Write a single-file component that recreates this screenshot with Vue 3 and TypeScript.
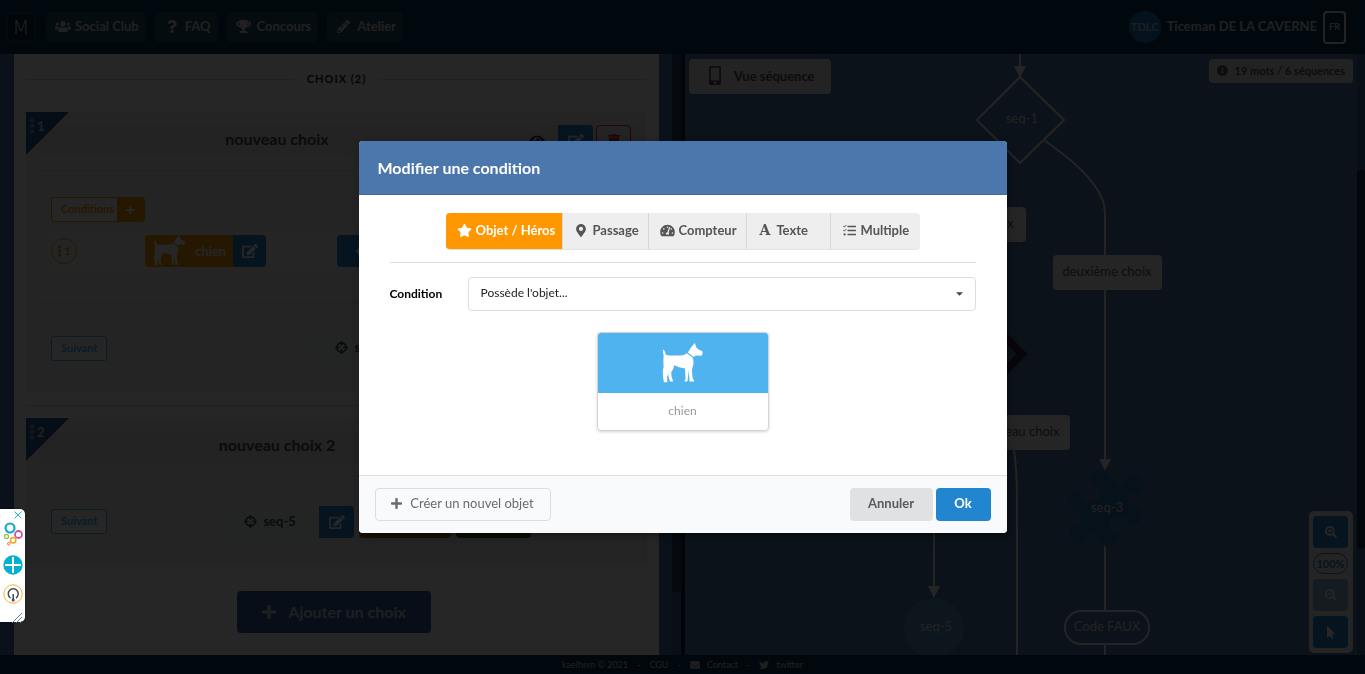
<script setup lang="ts">
import { ref, h, type FunctionalComponent } from 'vue'

interface Glyph { w: number; d: string }

const lens = 'M505 476.7L476.7 505c-9.4 9.4-24.6 9.4-33.9 0L343 405.3c-4.5-4.5-7-10.6-7-17V372c-35.3 27.6-79.7 44-128 44C93.1 416 0 322.9 0 208S93.1 0 208 0s208 93.1 208 208c0 48.3-16.4 92.7-44 128h16.3c6.4 0 12.5 2.5 17 7l99.7 99.7c9.3 9.4 9.3 24.6 0 34zM344 208c0-75.2-60.8-136-136-136S72 132.8 72 208s60.8 136 136 136 136-60.8 136-136z'

const glyphs: Record<string, Glyph> = {
  users: { w: 640, d: 'M96 224c35.3 0 64-28.7 64-64s-28.7-64-64-64-64 28.7-64 64 28.7 64 64 64zm448 0c35.3 0 64-28.7 64-64s-28.7-64-64-64-64 28.7-64 64 28.7 64 64 64zm32 32h-64c-17.6 0-33.5 7.1-45.1 18.6 40.3 22.1 68.9 62 75.1 109.4h66c17.7 0 32-14.3 32-32v-32c0-35.3-28.7-64-64-64zm-256 0c61.9 0 112-50.1 112-112S381.9 32 320 32 208 82.1 208 144s50.1 112 112 112zm76.8 32h-8.3c-20.8 10-43.9 16-68.5 16s-47.6-6-68.5-16h-8.3C179.6 288 128 339.6 128 403.2V432c0 26.5 21.5 48 48 48h288c26.5 0 48-21.5 48-48v-28.8c0-63.6-51.6-115.2-115.2-115.2zm-223.7-13.4C161.5 263.1 145.6 256 128 256H64c-35.3 0-64 28.7-64 64v32c0 17.7 14.3 32 32 32h65.9c6.3-47.4 34.9-87.3 75.2-109.4z' },
  question: { w: 384, d: 'M202 0C122.2 0 70.5 32.7 29.900 91c-7.400 10.600-5.100 25.100 5.200 32.900l43.100 32.700c10.400 7.900 25.100 6 33.300-4.100 25-31.400 43.600-49.400 82.700-49.400 30.800 0 68.800 19.800 68.800 49.600 0 22.600-18.600 34.100-49 51.200-35.400 19.900-82.300 44.600-82.300 106.400V320c0 13.300 10.700 24 24 24h72.500c13.300 0 24-10.700 24-24v-5.800c0-42.900 125.300-44.600 125.300-160.600C377.500 66.300 286.900 0 202 0zM192 373.500c-38.200 0-69.300 31.100-69.300 69.300S153.800 512 192 512s69.300-31.100 69.300-69.300-31.100-69.200-69.300-69.200z' },
  trophy: { w: 576, d: 'M552 64H448V24c0-13.3-10.7-24-24-24H152c-13.3 0-24 10.7-24 24v40H24C10.7 64 0 74.7 0 88v56c0 35.7 22.5 72.4 61.9 100.7 31.5 22.7 69.8 37.1 110 41.7C203.3 338.5 240 360 240 360v72h-48c-35.3 0-64 20.7-64 56v12c0 6.6 5.4 12 12 12h296c6.6 0 12-5.4 12-12v-12c0-35.3-28.7-56-64-56h-48v-72s36.7-21.5 68.1-73.6c40.3-4.6 78.6-19 110-41.7 39.3-28.3 61.9-65 61.9-100.7V88c0-13.3-10.7-24-24-24zM99.3 192.8C74.9 175.2 64 155.6 64 144v-16h64.2c1 32.6 5.8 61.2 12.8 86.2-15.1-5.2-29.2-12.4-41.7-21.4zM512 144c0 16.1-17.7 36.1-35.3 48.8-12.5 9-26.7 16.2-41.8 21.4 7-25 11.8-53.6 12.8-86.2H512v16z' },
  pencil: { w: 512, d: 'M497.9 142.1l-46.1 46.1c-4.7 4.7-12.3 4.7-17 0l-111-111c-4.7-4.7-4.7-12.3 0-17l46.1-46.1c18.7-18.7 49.1-18.7 67.9 0l60.1 60.1c18.8 18.7 18.8 49.1 0 67.900zM284.200 99.800L21.600 362.400.4 483.900c-2.900 16.400 11.400 30.600 27.800 27.800l121.500-21.300 262.600-262.600c4.700-4.700 4.700-12.300 0-17l-111-111c-4.800-4.700-12.400-4.700-17.100 0zM124.100 339.900c-5.500-5.500-5.500-14.300 0-19.800l154-154c5.500-5.500 14.300-5.500 19.800 0s5.500 14.300 0 19.800l-154 154c-5.500 5.500-14.300 5.500-19.800 0zM88 424h48v36.300l-64.500 11.300-31.100-31.100L51.700 376H88v48z' },
  star: { w: 576, d: 'M259.3 17.8L194 150.2 47.9 171.5c-26.2 3.8-36.7 36.1-17.7 54.6l105.7 103-25 145.5c-4.5 26.3 23.2 46 46.4 33.7L288 439.6l130.7 68.7c23.2 12.2 50.9-7.4 46.4-33.7l-25-145.5 105.7-103c19-18.5 8.5-50.8-17.7-54.6L382 150.2 316.7 17.8c-11.7-23.6-45.6-23.9-57.4 0z' },
  marker: { w: 384, d: 'M172.268 501.67C26.97 291.031 0 269.413 0 192 0 85.961 85.961 0 192 0s192 85.961 192 192c0 77.413-26.97 99.031-172.268 309.67-9.535 13.774-29.93 13.773-39.464 0zM192 272c44.183 0 80-35.817 80-80s-35.817-80-80-80-80 35.817-80 80 35.817 80 80 80z' },
  gauge: { w: 576, d: 'M288 32C128.94 32 0 160.94 0 320c0 52.8 14.25 102.26 39.06 144.8 5.61 9.62 16.3 15.2 27.44 15.2h443c11.14 0 21.83-5.58 27.44-15.2C561.75 422.26 576 372.8 576 320c0-159.06-128.94-288-288-288zm0 64c14.71 0 26.58 10.13 30.32 23.65-1.11 2.26-2.64 4.23-3.45 6.67l-9.22 27.67c-5.13 3.49-10.97 6.01-17.64 6.01-17.67 0-32-14.33-32-32S270.33 96 288 96zM96 384c-17.67 0-32-14.33-32-32s14.33-32 32-32 32 14.33 32 32-14.33 32-32 32zm48-160c-17.67 0-32-14.33-32-32s14.33-32 32-32 32 14.33 32 32-14.33 32-32 32zm246.77-72.41l-61.33 184C343.13 347.33 352 364.54 352 384c0 11.72-3.38 22.55-8.88 32H232.88c-5.5-9.45-8.88-20.28-8.88-32 0-33.94 26.5-61.43 59.9-63.59l61.34-184.01c4.17-12.56 17.73-19.45 30.36-15.17 12.57 4.19 19.35 17.79 15.17 30.36zm14.66 57.2l15.52-46.55c3.47-1.29 7.13-2.23 11.05-2.23 17.67 0 32 14.33 32 32s-14.33 32-32 32c-11.38-.01-20.89-6.28-26.57-15.22zM480 384c-17.67 0-32-14.33-32-32s14.33-32 32-32 32 14.33 32 32-14.33 32-32 32z' },
  tasks: { w: 512, d: 'M190 66h306q16 0 16 16v28q0 16-16 16H190q-16 0-16-16V82q0-16 16-16zM190 226h306q16 0 16 16v28q0 16-16 16H190q-16 0-16-16v-28q0-16 16-16zM190 386h306q16 0 16 16v28q0 16-16 16H190q-16 0-16-16v-28q0-16 16-16zM0 88l22-22 30 30 68-68 22 22-90 90zM0 248l22-22 30 30 68-68 22 22-90 90zM64 368a44 44 0 1 1 0 88 44 44 0 0 1 0-88z' },
  plus: { w: 448, d: 'M416 208H272V64c0-17.67-14.33-32-32-32h-32c-17.67 0-32 14.33-32 32v144H32c-17.67 0-32 14.33-32 32v32c0 17.67 14.33 32 32 32h144v144c0 17.67 14.33 32 32 32h32c17.67 0 32-14.33 32-32V304h144c17.67 0 32-14.33 32-32v-32c0-17.67-14.33-32-32-32z' },
  edit: { w: 576, d: 'M402.6 83.2l90.2 90.2c3.8 3.8 3.8 10 0 13.8L274.4 405.6l-92.8 10.3c-12.4 1.4-22.9-9.1-21.5-21.5l10.3-92.8L388.8 83.2c3.8-3.8 10-3.8 13.8 0zm162-22.9l-48.8-48.8c-15.2-15.2-39.9-15.2-55.2 0l-35.4 35.4c-3.8 3.8-3.8 10 0 13.8l90.2 90.2c3.8 3.8 10 3.8 13.8 0l35.4-35.4c15.2-15.3 15.2-40 0-55.2zM384 346.2V448H64V128h229.8c3.2 0 6.2-1.3 8.5-3.5l40-40c7.6-7.6 2.2-20.5-8.5-20.5H48C21.5 64 0 85.5 0 112v352c0 26.5 21.5 48 48 48h352c26.5 0 48-21.5 48-48V306.2c0-10.7-12.9-16-20.5-8.5l-40 40c-2.2 2.3-3.5 5.3-3.5 8.5z' },
  eye: { w: 576, d: 'M288 64C160 64 60 140 4 241c-5 9-5 21 0 30 56 101 156 177 284 177s228-76 284-177c5-9 5-21 0-30C516 140 416 64 288 64zm0 336a144 144 0 1 1 0-288 144 144 0 0 1 0 288zm0-240a95 95 0 0 0-25 4 48 48 0 0 1-67 67 96 96 0 1 0 92-71z' },
  trash: { w: 448, d: 'M32 464a48 48 0 0 0 48 48h288a48 48 0 0 0 48-48V128H32zM432 32H312l-9-19a24 24 0 0 0-22-13H167a24 24 0 0 0-22 13l-9 19H16A16 16 0 0 0 0 48v32a16 16 0 0 0 16 16h416a16 16 0 0 0 16-16V48a16 16 0 0 0-16-16z' },
  target: { w: 512, d: 'M500 224h-30C455 130 382 57 288 42V12c0-7-5-12-12-12h-40c-7 0-12 5-12 12v30C130 57 57 130 42 224H12c-7 0-12 5-12 12v40c0 7 5 12 12 12h30c15 94 88 167 182 182v30c0 7 5 12 12 12h40c7 0 12-5 12-12v-30c94-15 167-88 182-182h30c7 0 12-5 12-12v-40c0-7-5-12-12-12zM288 405v-65c0-7-5-12-12-12h-40c-7 0-12 5-12 12v65c-58-13-104-59-117-117h65c7 0 12-5 12-12v-40c0-7-5-12-12-12h-65c13-58 59-104 117-117v65c0 7 5 12 12 12h40c7 0 12-5 12-12v-65c58 13 104 59 117 117h-65c-7 0-12 5-12 12v40c0 7 5 12 12 12h65c-13 58-59 104-117 117z' },
  dots: { w: 192, d: 'M96 184a72 72 0 1 1 0 144 72 72 0 0 1 0-144zM24 80a72 72 0 1 1 144 0 72 72 0 0 1-144 0zm0 352a72 72 0 1 1 144 0 72 72 0 0 1-144 0z' },
  mobile: { w: 320, d: 'M272 0H48C21.5 0 0 21.5 0 48v416c0 26.5 21.5 48 48 48h224c26.5 0 48-21.5 48-48V48c0-26.5-21.5-48-48-48zM160 480a32 32 0 1 1 0-64 32 32 0 0 1 0 64zm112-108c0 6.6-5.4 12-12 12H60c-6.6 0-12-5.4-12-12V60c0-6.6 5.4-12 12-12h200c6.6 0 12 5.4 12 12v312z' },
  info: { w: 512, d: 'M256 8C119.043 8 8 119.083 8 256c0 136.997 111.043 248 248 248s248-111.003 248-248C504 119.083 392.957 8 256 8zm0 110c23.196 0 42 18.804 42 42s-18.804 42-42 42-42-18.804-42-42 18.804-42 42-42zm56 254c0 6.627-5.373 12-12 12h-88c-6.627 0-12-5.373-12-12v-24c0-6.627 5.373-12 12-12h12v-64h-12c-6.627 0-12-5.373-12-12v-24c0-6.627 5.373-12 12-12h64c6.627 0 12 5.373 12 12v100h12c6.627 0 12 5.373 12 12v24z' },
  zoomIn: { w: 512, d: 'M304 192v32c0 6.6-5.4 12-12 12h-56v56c0 6.6-5.4 12-12 12h-32c-6.6 0-12-5.4-12-12v-56h-56c-6.6 0-12-5.4-12-12v-32c0-6.6 5.4-12 12-12h56v-56c0-6.6 5.4-12 12-12h32c6.6 0 12 5.4 12 12v56h56c6.6 0 12 5.4 12 12z' + lens },
  zoomOut: { w: 512, d: 'M304 192v32c0 6.6-5.4 12-12 12H124c-6.6 0-12-5.4-12-12v-32c0-6.6 5.4-12 12-12h168c6.6 0 12 5.4 12 12z' + lens },
  pointer: { w: 320, d: 'M302.189 329.126H196.105l55.831 135.993c3.889 9.428-.555 19.999-9.444 23.999l-49.165 21.427c-9.165 4-19.443-.571-23.332-9.714l-53.053-129.136-86.664 89.138C18.729 472.71 0 463.554 0 447.977V18.299C0 1.899 19.921-6.096 30.277 5.443l284.412 292.542c11.472 11.179 3.007 31.141-12.5 31.141z' },
  envelope: { w: 512, d: 'M502.3 190.8c3.9-3.1 9.7-.2 9.7 4.7V400c0 26.5-21.5 48-48 48H48c-26.5 0-48-21.5-48-48V195.6c0-5 5.7-7.8 9.7-4.7 22.4 17.4 52.1 39.5 154.1 113.6 21.1 15.4 56.7 47.8 92.2 47.6 35.7.3 72-32.8 92.3-47.6 102-74.1 131.6-96.3 154-113.7zM256 320c23.2.4 56.6-29.2 73.4-41.4 132.7-96.3 142.8-104.7 173.4-128.7 5.8-4.5 9.2-11.5 9.2-18.9v-19c0-26.5-21.5-48-48-48H48c-26.5 0-48 21.5-48 48v19c0 7.4 3.4 14.3 9.2 18.9 30.6 23.9 40.7 32.4 173.4 128.7 16.8 12.2 50.2 41.8 73.4 41.4z' },
  twitter: { w: 512, d: 'M459.37 151.716c.325 4.548.325 9.097.325 13.645 0 138.72-105.583 298.558-298.558 298.558-59.452 0-114.68-17.219-161.137-47.106 8.447.974 16.568 1.299 25.34 1.299 49.055 0 94.213-16.568 130.274-44.832-46.132-.975-84.792-31.188-98.112-72.772 6.498.974 12.995 1.624 19.818 1.624 9.421 0 18.843-1.3 27.614-3.573-48.081-9.747-84.143-51.98-84.143-102.985v-1.299c13.969 7.797 30.214 12.67 47.431 13.319-28.264-18.843-46.781-51.005-46.781-87.391 0-19.492 5.197-37.36 14.294-52.954 51.655 63.675 129.3 105.258 216.365 109.807-1.624-7.797-2.599-15.918-2.599-24.04 0-57.828 46.782-104.934 104.934-104.934 30.213 0 57.502 12.67 76.67 33.137 23.715-4.548 46.456-13.32 66.599-25.34-7.798 24.366-24.366 44.833-46.132 57.827 21.117-2.273 41.584-8.122 60.426-16.243-14.292 20.791-32.161 39.308-52.628 54.253z' },
}

const Icon: FunctionalComponent<{ name: string; size?: number }> = (props) => {
  const g = glyphs[props.name]
  const size = props.size ?? 14
  return h('svg', { viewBox: `0 0 ${g.w} 512`, width: Math.round((size * g.w) / 512), height: size, fill: 'currentColor', 'aria-hidden': 'true', style: 'flex:none;display:block' }, [h('path', { d: g.d })])
}
Icon.props = ['name', 'size']

const Dog: FunctionalComponent = () =>
  h('svg', { viewBox: '0 0 40 40', fill: 'currentColor', 'aria-hidden': 'true' }, [
    h('path', { d: 'M.4 6.5Q2.3 7 2.6 9.5L3.4 11.8Q5 12.7 8 12.6H19Q22 12 24.3 10.2L30.2 14.8Q31.6 18 30.8 21.5L29.4 27L30 34Q30.2 36.6 31.7 37.4L31.4 38.4H27L26.4 27L25.2 37L24.6 38.4H21.9L23 36L22.5 25.5Q16 24.5 11.7 22.2Q11.4 26 8.8 29Q8.2 33 10.6 38.4H7.5Q6 36 5.7 31L4.5 34L4.9 39.2H1.4Q.3 34 .2 28.5Q1.6 24 .9 19Q.8 15.5 1.2 12.5Q.3 10 .4 6.5Z' }),
    h('path', { d: 'M25.2 9.4Q27.2 7.5 27.8 5.2L32.3 0Q33.2 2 33.6 4.3Q35 5.2 36 6.6L40 8.2V10.9L38.9 12.7L34.5 12.4Q32.6 12.2 31.1 14Z' }),
  ])

const tabs = [
  { id: 'objet', label: 'Objet / Héros', icon: 'star' },
  { id: 'passage', label: 'Passage', icon: 'marker' },
  { id: 'compteur', label: 'Compteur', icon: 'gauge' },
  { id: 'texte', label: 'Texte', icon: 'font' },
  { id: 'multiple', label: 'Multiple', icon: 'tasks' },
]
const activeTab = ref('objet')
const condition = ref('possede')

const nav = [
  { label: 'Social Club', icon: 'users' },
  { label: 'FAQ', icon: 'question' },
  { label: 'Concours', icon: 'trophy' },
  { label: 'Atelier', icon: 'pencil' },
]
</script>

<template>
  <div class="page">
    <header class="topbar">
      <a class="logo" href="#">M</a>
      <nav class="nav">
        <a v-for="n in nav" :key="n.label" href="#" :class="n.icon"><Icon :name="n.icon" :size="13" />{{ n.label }}</a>
      </nav>
      <div class="user">
        <span class="avatar">TDLC</span>
        <span class="name">Ticeman DE LA CAVERNE</span>
        <button type="button" class="lang">FR</button>
      </div>
    </header>

    <main class="work">
      <section class="editor">
        <div class="sheet">
          <h2 class="rule-title">CHOIX (2)</h2>

          <article class="choice">
            <div class="corner"><Icon name="dots" :size="16" />1</div>
            <div class="choice-head">
              <h3>nouveau choix</h3>
              <div class="tools">
                <Icon name="eye" />
                <button type="button" class="sq blue" aria-label="Modifier"><Icon name="edit" /></button>
                <button type="button" class="sq red" aria-label="Supprimer"><Icon name="trash" /></button>
              </div>
            </div>
            <div class="section conditions">
              <div class="tag orange"><span>Conditions</span><button type="button" aria-label="Ajouter"><Icon name="plus" :size="10" /></button></div>
              <div class="cond-row">
                <span class="round"><Icon name="dots" :size="12" />1</span>
                <div class="item"><span class="item-name"><Dog class="dog" />chien</span><button type="button" class="sq blue" aria-label="Modifier"><Icon name="edit" /></button></div>
                <button type="button" class="op"><Icon name="target" /></button>
              </div>
            </div>
            <div class="section next first">
              <div class="tag sky"><span>Suivant</span></div>
              <div class="goal"><span><Icon name="target" :size="13" />seq-2</span><button type="button" class="sq blue" aria-label="Modifier"><Icon name="edit" /></button></div>
            </div>
          </article>

          <hr class="between">

          <article class="choice">
            <div class="corner"><Icon name="dots" :size="16" />2</div>
            <div class="choice-head"><h3>nouveau choix 2</h3><div class="tools"></div></div>
            <div class="section next second">
              <div class="tag sky"><span>Suivant</span></div>
              <div class="goal"><span><Icon name="target" :size="13" />seq-5</span><button type="button" class="sq blue" aria-label="Modifier"><Icon name="edit" /></button></div>
              <i class="chip amber"></i><i class="chip green"></i>
            </div>
          </article>

          <button type="button" class="add"><Icon name="plus" :size="16" />Ajouter un choix</button>
        </div>
        <div class="track"><div class="thumb left"></div></div>
      </section>

      <section class="canvas">
        <svg class="graph" width="100%" height="100%">
          <g transform="translate(-685 -54)">
            <g class="edge">
              <path d="M1020 54V68M1044 140L1063 154Q1105 187 1105 213V462M934 450V590M1014 450Q1017 470 1017 500V655M1105 545V611M1105 644V655" />
              <path d="M977 120L1020 77L1064 120L1020 163Z" />
            </g>
            <path class="head" d="M1014 66H1026L1020 78ZM1099 459H1111L1105 471ZM928 586H940L934 598Z" />
            <path class="test" d="M970 301L1022 354L970 407Z" />
            <g class="tagbox">
              <rect x="917" y="207" width="109" height="35" rx="4" />
              <rect x="1053" y="255" width="109" height="35" rx="4" />
              <rect x="960" y="415" width="110" height="35" rx="4" />
            </g>
            <path class="piece" transform="translate(880 460) scale(.333)" d="M627 58Q640 36 672 30Q692 50 712 78Q733 76 735 68A29 29 0 1 1 770 103Q742 104 737 113Q760 140 793 160Q780 188 757 203Q748 194 742 178A30 30 0 1 0 696 217Q714 222 724 233Q708 256 680 262Q663 254 645 216Q632 212 626 228A29 29 0 1 1 592 195Q604 188 609 176Q582 150 563 129Q572 100 598 90Q604 116 610 122A31 31 0 1 0 654 76Q636 70 627 58Z" />
            <circle class="bubble" cx="934" cy="628" r="30" />
            <rect class="pill" x="1065" y="611" width="84" height="33" rx="16" />
            <g class="labels">
              <text x="1022" y="123">seq-1</text>
              <text x="1107" y="512">seq-3</text>
              <text x="936" y="631">seq-5</text>
              <text x="1107" y="631">Code FAUX</text>
              <text class="ink" x="972" y="228">nouveau choix</text>
              <text class="ink" x="1107" y="276">deuxième choix</text>
              <text class="ink" x="1018" y="436">nouveau choix</text>
            </g>
          </g>
        </svg>
        <div class="overlay">
          <div class="overlay-top">
            <button type="button" class="seqview"><Icon name="mobile" :size="19" />Vue séquence</button>
            <span class="stats"><Icon name="info" :size="11" />19 mots / 6 séquences</span>
          </div>
          <div class="zoomer">
            <button type="button" aria-label="Zoom avant"><Icon name="zoomIn" :size="12" /></button>
            <span>100%</span>
            <button type="button" aria-label="Zoom arrière" disabled><Icon name="zoomOut" :size="12" /></button>
            <button type="button" aria-label="Sélection"><Icon name="pointer" :size="13" /></button>
          </div>
        </div>
      </section>
      <div class="track page-track"><div class="thumb right"></div></div>
    </main>

    <footer class="foot">
      <span>kaelhem © 2021</span><span>-</span><a href="#">CGU</a><span>-</span>
      <a href="#"><Icon name="envelope" :size="10" />Contact</a><span>-</span>
      <a href="#"><Icon name="twitter" :size="10" />twitter</a>
    </footer>

    <div class="dimmer">
      <div class="modal" role="dialog" aria-labelledby="modal-title">
        <h1 id="modal-title">Modifier une condition</h1>
        <div class="modal-body">
          <div class="tabs" role="tablist">
            <button v-for="t in tabs" :key="t.id" type="button" role="tab" :aria-selected="activeTab === t.id" :class="[t.id, { active: activeTab === t.id }]" @click="activeTab = t.id">
              <span v-if="t.icon === 'font'" class="serif-a" aria-hidden="true">A</span>
              <Icon v-else :name="t.icon" :size="13" />{{ t.label }}
            </button>
          </div>
          <hr>
          <div class="field">
            <label for="condition">Condition</label>
            <div class="select-wrap">
              <select id="condition" v-model="condition"><option value="possede">Possède l'objet...</option></select>
              <svg viewBox="0 0 8 4" width="7" height="4" aria-hidden="true"><path d="M0 0H8L4 4Z" /></svg>
            </div>
          </div>
          <button type="button" class="object"><span class="pic"><Dog class="dog" /></span><span class="cap">chien</span></button>
        </div>
        <div class="modal-foot">
          <button type="button" class="create"><Icon name="plus" :size="13" />Créer un nouvel objet</button>
          <button type="button" class="cancel">Annuler</button>
          <button type="button" class="ok">Ok</button>
        </div>
      </div>
    </div>

    <aside class="widget">
      <button type="button" aria-label="Fermer"><svg viewBox="0 0 8 8" width="8" height="8" fill="none" stroke="#26b4d4"><path d="M.5.5L7.5 7.5M7.5.5L.5 7.5" /></svg></button>
      <svg viewBox="0 0 20 24" width="20" height="24" fill="none">
        <circle cx="7" cy="6" r="4.5" stroke="#12abc8" stroke-width="2.2" /><circle cx="15.500" cy="12.500" r="3.500" stroke="#cf4fa6" stroke-width="1.800" />
        <circle cx="3.5" cy="14.5" r="2.1" stroke="#8cc63f" stroke-width="1.2" /><circle cx="10.200" cy="18.300" r="2.700" stroke="#f9a11b" stroke-width="1.500" /><circle cx="5.800" cy="21.700" r="1.300" stroke="#f07040" />
      </svg>
      <svg viewBox="0 0 20 20" width="20" height="20"><circle cx="10" cy="10" r="9.7" fill="#02b0d0" /><path d="M10 2V18M2 10H18" stroke="#fff" stroke-width="2" /></svg>
      <svg viewBox="0 0 20 20" width="20" height="20" fill="none"><circle cx="10" cy="10" r="9.2" stroke="#fbb12c" /><path d="M7.5 14A5 5 0 1 1 13 14M10.2 10V15" stroke="#3e4a59" stroke-width="1.5" /><circle cx="10.2" cy="16" r="1.5" fill="#3e4a59" /></svg>
      <svg class="grip" viewBox="0 0 10 10" width="10" height="10" fill="none" stroke="#6f8294"><path d="M0 10L10 0M4 10L10 4M8 10L10 8" /></svg>
    </aside>
  </div>
</template>

<style>
body { background: #06395f; }
</style>

<style scoped>
*, *::before, *::after { box-sizing: border-box; }
.page { --blue: #2185d0; --navy: #4c77ac; height: 100vh; display: flex; flex-direction: column; overflow: hidden; font-family: Lato, "Liberation Sans", sans-serif; font-size: 13px; line-height: 18px; color: #222; }
button, select { font: inherit; color: inherit; border: 0; margin: 0; padding: 0; background: none; cursor: pointer; }
a { color: inherit; text-decoration: none; }
h1, h2, h3 { margin: 0; }
hr { border: 0; border-top: 1px solid #dededf; margin: 0; }

.topbar { height: 54px; flex: none; background: #06395f; display: flex; align-items: center; padding: 0 19px 0 6px; color: #fff; }
.logo { width: 30px; height: 30px; border: 2px solid #12486a; border-radius: 5px; background: #042c48; color: #d8d8d8; display: flex; align-items: center; justify-content: center; font-family: "DejaVu Sans", sans-serif; font-weight: 200; font-size: 20px; line-height: 26px; }
.nav { display: flex; gap: 9px; margin-left: 10px; flex: 1; }
.nav a { height: 30px; border-radius: 5px; padding: 0 7px 2px 9px; background: #1d5069; display: flex; align-items: center; gap: 4px; font-weight: 700; color: #d8d8d8; }
.nav a.question { padding-left: 12px; gap: 8px; }
.nav a.trophy { gap: 6px; }
.nav a.pencil { gap: 7px; padding-left: 10px; }
.user { display: flex; align-items: center; gap: 6px; font-weight: 700; color: #d8d8d8; }
.name { padding-bottom: 2px; }
.avatar { width: 32px; height: 32px; border-radius: 50%; background: #1a78bb; color: #b5cfe3; font-size: 11px; display: flex; align-items: center; justify-content: center; }
.lang { width: 23px; height: 33px; border: 2px solid #e8e8e8; border-radius: 4px; font-size: 9px; }

.work { flex: 1; min-height: 0; display: flex; }
.editor { flex: 1 1 681px; min-width: 0; display: flex; background: #4272ac; padding-left: 14px; }
.sheet { flex: 1; min-width: 0; background: #fff; padding: 0 12px; overflow: hidden; margin-right: 13px; }
.track { width: 9px; flex: none; background: #3b6598; }
.thumb { background: #294166; border-radius: 4px; }
.thumb.left { height: 538px; }
.page-track { width: 8px; padding-top: 116px; }
.thumb.right { height: 379px; background: #172b48; }
.rule-title { display: flex; align-items: center; gap: 13px; height: 18px; margin: 16px 0 24px; font-size: 11px; letter-spacing: 1px; color: #1b1c1d; }
.rule-title::before, .rule-title::after { content: ""; flex: 1; height: 1px; background: #ddd; }
.choice { position: relative; background: #efefef; border-radius: 4px; padding: 13px 1px 0 13px; }
.corner { position: absolute; left: 0; top: 0; width: 43px; height: 43px; padding: 6px 0 0 3px; background: #27589a; clip-path: polygon(0 0, 100% 0, 0 100%); color: #cfd6e0; font-weight: 700; font-size: 13px; line-height: 16px; display: flex; gap: 2px; }
.corner svg { opacity: .5; }
.choice-head { display: flex; background: #e8e8e8; border-radius: 4px; height: 32px; margin-bottom: 13px; }
.choice-head h3 { flex: 1; font-size: 16px; line-height: 28px; text-align: center; color: #4a4a4a; }
.tools { width: 131px; display: flex; align-items: center; gap: 3px; padding-left: 14px; }
.tools > svg { margin-right: 10px; }
.sq { width: 33px; height: 32px; display: flex; align-items: center; justify-content: center; color: #fff; }
.tools .sq { width: 35px; }
.sq.blue { background: var(--blue); border-radius: 0 4px 4px 0; }
.sq.red { color: #db2828; border: 1px solid #db2828; border-radius: 4px; }
.section { border-top: 1px solid #dcdcdc; padding: 26px 0 0 12px; }
.conditions { height: 132px; }
.tag { display: inline-flex; height: 25px; border: 1px solid; border-radius: 3px; background: #fff; font-weight: 700; font-size: 11px; line-height: 21px; overflow: hidden; }
.tag span { padding: 0 3px 0 9px; }
.tag.orange { color: #ff9800; border-color: #ff9800; }
.tag.orange button { width: 27px; background: #ff9800; color: #fff; display: flex; align-items: center; justify-content: center; }
.tag.sky { color: #4db4f0; }
.tag.sky span { padding-right: 9px; }
.cond-row { margin: 8px 0 0 -4px; height: 41px; background: #f7f7f7; display: flex; align-items: center; padding-left: 4px; }
.round { width: 26px; height: 26px; border: 1px solid #ff9800; border-radius: 50%; color: #ff9800; font-size: 12px; font-weight: 700; display: flex; align-items: center; justify-content: center; gap: 2px; }
.item { display: flex; margin-left: 68px; }
.item-name { width: 88px; height: 32px; background: #ff9800; border-radius: 4px 0 0 4px; color: #fff; font-weight: 700; display: flex; align-items: center; gap: 9px; padding-left: 8px; line-height: 30px; }
.item-name .dog { width: 33px; height: 31px; }
.op { width: 80px; height: 32px; margin-left: 71px; background: var(--blue); border-radius: 4px; color: #fff; padding-left: 19px; }
.next { display: flex; position: relative; align-items: flex-start; }
.next.first { height: 90px; padding-top: 33px; }
.next.second { height: 90px; padding-top: 32px; }
.goal { display: flex; margin-left: 111px; margin-top: -3px; color: #4c4c4c; font-weight: 700; }
.goal > span { width: 101px; height: 32px; border-radius: 4px 0 0 4px; background: #e9f2ee; display: flex; align-items: center; gap: 6px; padding: 0 0 2px 26px; line-height: 28px; }
.goal .sq { width: 35px; }
.first .goal { margin-left: 202px; margin-top: -4px; }
.chip { height: 32px; margin: -3px 0 0 5px; border-radius: 4px; }
.amber { width: 92px; background: #a56a10; }
.green { width: 75px; background: #37631c; }
.between { margin: 13px 0 12px; border-color: #ddd; }
.add { display: flex; align-items: center; justify-content: center; gap: 12px; margin: 25px auto 0 211px; width: 194px; height: 42px; border-radius: 4px; background: #36609c; color: #c8d0da; font-weight: 700; font-size: 16px; }

.canvas { flex: 1 1 676px; min-width: 0; border-left: 4px solid #0a2038; background: #4c77a5; display: grid; }
.graph, .overlay { grid-area: 1 / 1; min-height: 0; overflow: hidden; }
.edge { fill: none; stroke: #eee; stroke-width: 2; }
.head { fill: #eee; }
.test { fill: none; stroke: #3a2050; stroke-width: 8; }
.tagbox { fill: #f6f6f6; }
.piece { fill: #2f73ac; }
.bubble { fill: #5595b8; }
.pill { fill: none; stroke: #eee; stroke-width: 2; }
.labels { fill: #e4e4e4; font-size: 13px; text-anchor: middle; }
.labels .ink { fill: #4c6088; }
.overlay { z-index: 1; display: flex; flex-direction: column; justify-content: space-between; align-items: flex-end; padding: 5px 4px 2px; }
.overlay-top { align-self: stretch; display: flex; justify-content: space-between; align-items: flex-start; }
.seqview { width: 142px; height: 35px; border-radius: 4px; background: #e8e8e8; color: #555; font-weight: 700; display: flex; align-items: center; gap: 13px; padding: 0 0 2px 20px; }
.stats { height: 24px; border-radius: 4px; background: #e4e4e4; color: #555; font-weight: 700; font-size: 11px; display: flex; align-items: center; gap: 7px; padding: 0 8px 1px; }
.zoomer { width: 44px; border-radius: 5px; background: #eee; display: flex; flex-direction: column; align-items: flex-start; gap: 5px; padding: 5px 4px; }
.zoomer button { width: 35px; height: 32px; border-radius: 4px; background: var(--blue); color: #fff; display: flex; align-items: center; justify-content: center; }
.zoomer button:disabled { opacity: .5; }
.zoomer span { width: 35px; height: 21px; border: 1px solid var(--blue); border-radius: 11px; color: var(--blue); font-size: 11px; line-height: 19px; font-weight: 700; text-align: center; }
.foot { height: 19px; flex: none; background: #06395f; color: #d0d0d0; display: flex; align-items: center; justify-content: center; gap: 9px; font-size: 9px; }
.foot a { display: flex; align-items: center; gap: 7px; }

.dimmer { position: fixed; inset: 0; z-index: 10; background: rgba(0, 0, 0, .85); display: flex; align-items: center; justify-content: center; }
.modal { width: 648px; max-width: 95%; background: #fff; border-radius: 4px; overflow: hidden; box-shadow: 1px 3px 3px 0 rgba(0, 0, 0, .2), 1px 3px 15px 2px rgba(0, 0, 0, .2); }
.modal h1 { height: 54px; background: var(--navy); border-bottom: 1px solid #4169a0; color: #fff; font-size: 16px; line-height: 53px; padding-left: 19px; }
.modal-body { padding: 18px 31px 44px; display: flex; flex-direction: column; }
.tabs { align-self: center; display: flex; height: 37px; border-radius: 4px; overflow: hidden; background: #eee; border-bottom: 1px solid #e2e2e2; }
.tabs button { display: flex; align-items: center; gap: 5px; border-right: 1px solid #d8d8d8; color: #555; font-weight: 700; padding: 0 0 2px 12px; white-space: nowrap; }
.tabs .objet { width: 117px; padding-left: 11px; gap: 4px; }
.tabs button.active { background: #ff9800; color: #fff; }
.tabs .passage { width: 86px; padding-left: 13px; gap: 7px; }
.tabs .compteur { width: 98px; padding-left: 11px; gap: 4px; }
.tabs .texte { width: 84px; padding-left: 13px; gap: 6px; }
.tabs .multiple { width: 89px; border-right: 0; }
.serif-a { font-family: "DejaVu Serif", "Liberation Serif", serif; font-weight: 700; font-size: 14px; }
.modal-body hr { margin: 12px 0 14px; }
.field { display: flex; align-items: center; }
.field label { width: 78px; font-size: 12px; font-weight: 700; color: #000; }
.select-wrap { flex: 1; display: grid; align-items: center; }
.select-wrap > * { grid-area: 1 / 1; }
.select-wrap svg { justify-self: end; margin-right: 13px; fill: #444; pointer-events: none; }
select { width: 100%; height: 34px; appearance: none; border: 1px solid #dededf; border-radius: 4px; background: #fff; padding: 0 30px 2px 12px; font-size: 12px; color: #222; }
.object { align-self: center; width: 172px; margin-top: 21px; border: 1px solid #d4d4d5; border-radius: 4px; overflow: hidden; box-shadow: 0 1px 3px 0 #d4d4d5; display: flex; flex-direction: column; }
.pic { height: 60px; background: #4fb3ef; color: #fff; display: flex; align-items: center; justify-content: center; }
.pic .dog { width: 41px; height: 40px; }
.cap { height: 37px; line-height: 35px; font-size: 12px; color: #999; text-align: center; }
.modal-foot { height: 58px; border-top: 1px solid #dededf; background: #f9fafb; padding: 0 16px; display: flex; align-items: center; gap: 3px; }
.modal-foot button { height: 33px; border-radius: 4px; font-weight: 700; padding-bottom: 3px; }
.modal-foot .create { width: 176px; margin-right: auto; border: 1px solid #dcddde; color: #6b6b6b; font-weight: 400; display: flex; align-items: center; justify-content: center; gap: 8px; }
.modal-foot .cancel { width: 83px; background: #e0e1e2; color: #5a5a5a; }
.modal-foot .ok { width: 55px; background: #2185d0; color: #fff; }

.widget { position: fixed; z-index: 20; left: 0; bottom: 52px; width: 25px; height: 113px; background: #fff; border-radius: 0 5px 5px 0; display: flex; flex-direction: column; align-items: center; padding-top: 2px; box-shadow: 0 0 2px rgba(0, 0, 0, .5); }
.widget button { align-self: flex-end; width: 14px; height: 8px; display: flex; justify-content: center; margin-bottom: 3px; }
.widget > svg { flex: none; margin-bottom: 9px; }
.widget .grip { align-self: flex-end; margin-right: 3px; margin-bottom: 0; }
</style>
